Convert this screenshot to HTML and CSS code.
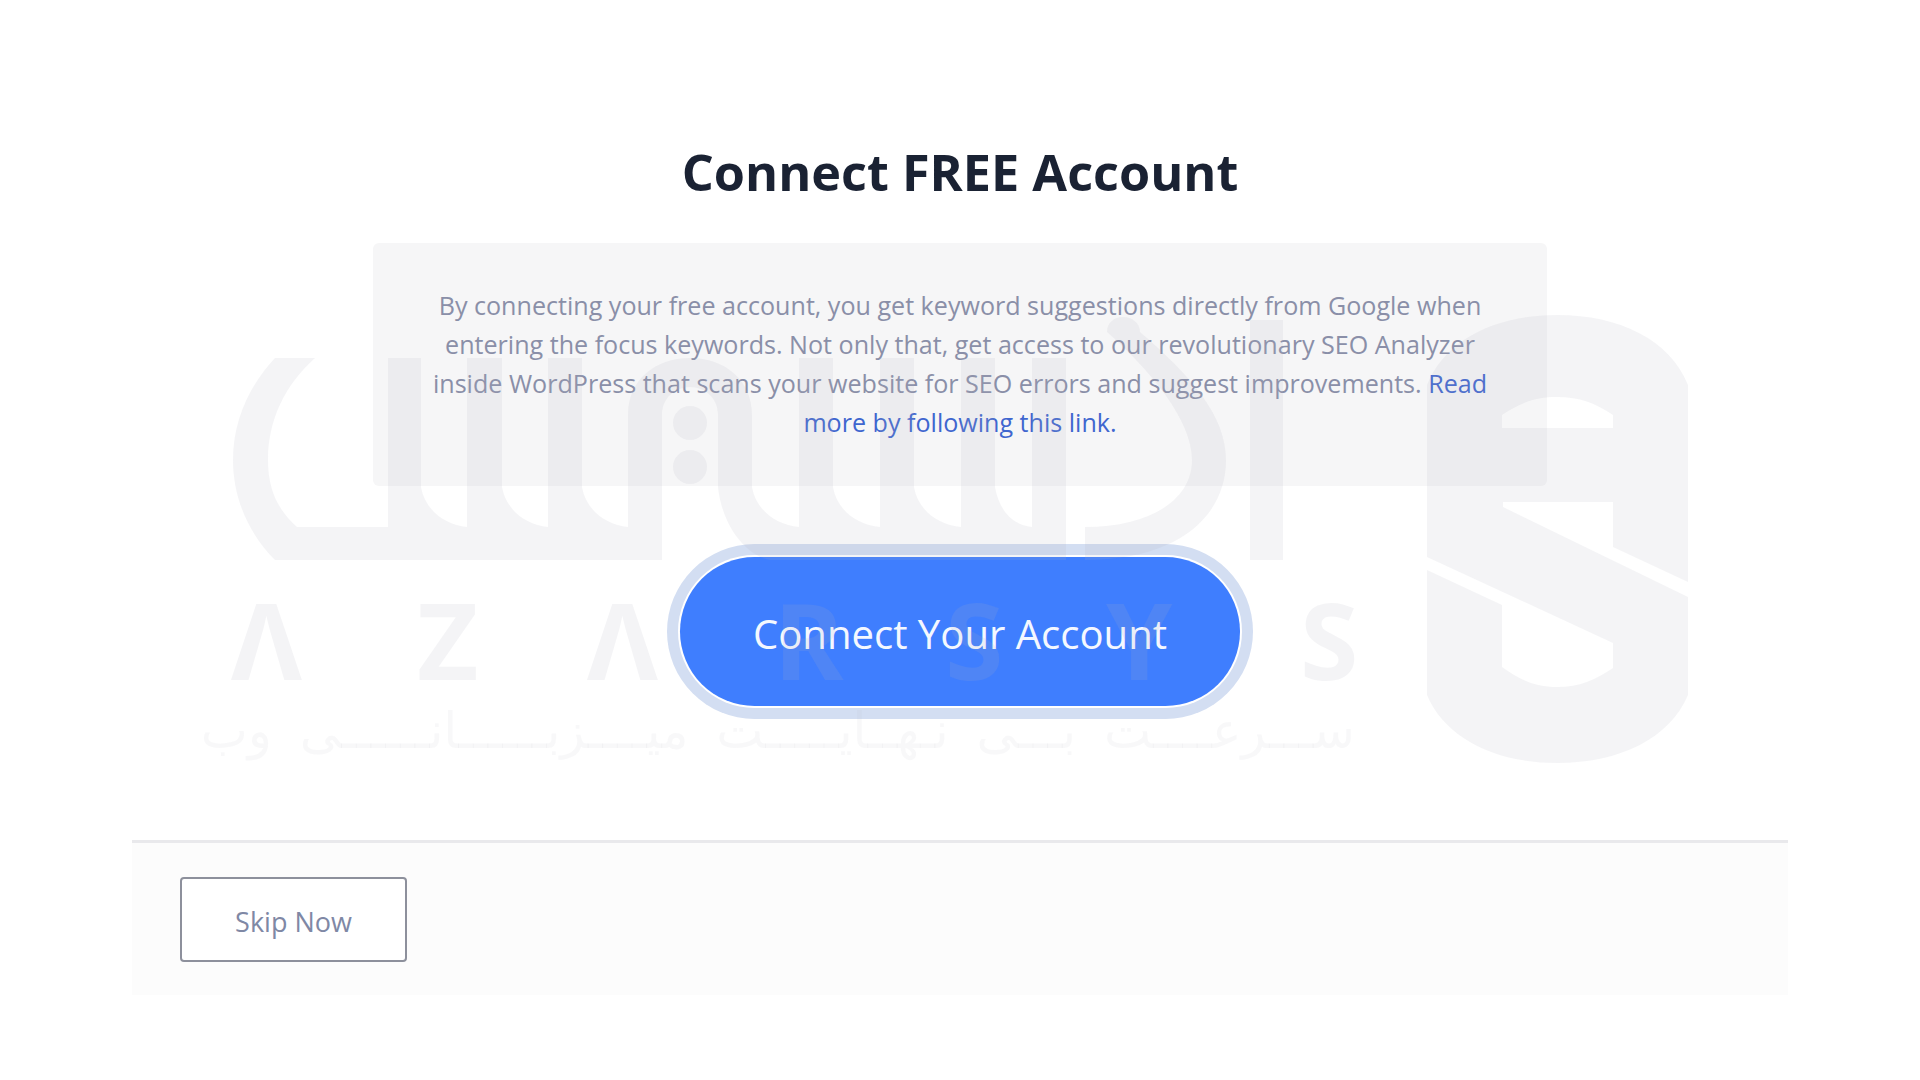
FILE: index.html
```html
<!DOCTYPE html>
<html lang="en">
<head>
<meta charset="utf-8">
<title>Connect FREE Account</title>
<link rel="stylesheet" href="styles.css">
</head>
<body>
<main class="page">
  <section class="content">
    <h1 class="title">Connect FREE Account</h1>
    <div class="panel">
      <p class="desc">By connecting your free account, you get keyword suggestions directly from Google when entering the focus keywords. Not only that, get access to our revolutionary SEO Analyzer inside WordPress that scans your website for SEO errors and suggest improvements. <a class="link" href="#">Read more by following this link.</a></p>
    </div>
    <div class="cta">
      <a class="connect" href="#">Connect Your Account</a>
    </div>
  </section>
  <footer class="footer">
    <a class="skip" href="#">Skip Now</a>
  </footer>
</main>

<svg class="watermark" viewBox="0 0 1920 1080" aria-hidden="true">
  <path class="wm-shape" fill-rule="evenodd" d="M1427 385 C1445 340 1495 315 1557 315 C1620 315 1670 340 1688 385 L1688 582 L1613 547 L1613 502 L1503 502 L1503 507 L1688 597 L1688 695 C1670 738 1620 763 1557 763 C1495 763 1445 738 1427 695 L1427 570 L1502 605 L1502 667 C1520 680 1535 687 1557 687 C1580 687 1595 680 1613 668 L1613 643 L1427 557 Z M1502 428 L1502 415 C1520 403 1535 397 1557 397 C1580 397 1595 403 1613 415 L1613 428 Z"/>
  <path class="wm-shape" d="M275 358 L315 358 C285 385 268 420 268 460 C268 490 278 510 297 527 L388 527 L388 358 L421 358 L421 487 C425 510 445 525 467 527 L467 358 L502 358 L502 487 C506 510 526 525 548 527 L548 358 L582 358 L582 487 C586 510 606 525 628 527 L628 415 C628 380 655 358 690 358 C725 358 752 380 752 415 L752 487 C756 510 776 525 799 527 L799 358 L833 358 L833 487 C837 510 857 525 880 527 L880 358 L914 358 L914 487 C918 510 938 525 961 527 L961 358 L995 358 L995 487 C999 510 1012 525 1032 527 L1032 358 L1066 358 L1066 560 L770 560 C745 555 722 525 718 487 L718 415 C718 398 705 387 690 387 C675 387 662 398 662 415 L662 560 L275 560 C250 535 233 500 233 460 C233 420 250 385 275 358 Z"/>
  <path class="wm-shape" d="M1107 332 C1107 323 1114 317 1123 317 C1132 317 1140 323 1140 332 C1190 375 1226 415 1226 460 C1226 515 1180 560 1085 560 L1085 527 C1150 527 1192 500 1192 460 C1192 420 1150 370 1107 332 Z"/>
  <path class="wm-shape" d="M1250 320 L1283 320 L1283 560 L1250 560 Z"/>
  <circle class="wm-shape" cx="690" cy="423" r="17"/>
  <circle class="wm-shape" cx="690" cy="467" r="17"/>
  <text class="wm-letters" x="231 417 587 774 945 1106 1300" y="680">ΛZΛRSYS</text>
  <text class="wm-tagline" x="1355" y="748" direction="rtl">ســـرعــــت بـــی نـهــایـــــت میــــزبــــــانــــــی وب</text>
</svg>
</body>
</html>
```

FILE: styles.css
```css
* { box-sizing: border-box; }
html, body { margin: 0; height: 100%; }
body {
  background: #fff;
  font-family: "Open Sans", "Noto Sans", sans-serif;
  overflow: hidden;
  position: relative;
}
.watermark {
  position: absolute;
  left: 0;
  top: 0;
  width: 1920px;
  height: 1080px;
  pointer-events: none;
}
.wm-shape { fill: #b4b4bc; fill-opacity: 0.14; }
.wm-letters {
  font-family: "Noto Sans", sans-serif;
  font-size: 106px;
  font-weight: 700;
  fill: #b4b4bc;
  fill-opacity: 0.14;
}
.wm-tagline {
  font-family: "DejaVu Sans", sans-serif;
  font-size: 50px;
  word-spacing: 12px;
  fill: #b4b4bc;
  fill-opacity: 0.09;
}
.page {
  width: 1656px;
  margin: 0 auto;
  padding-top: 142px;
}
.content { display: flex; flex-direction: column; align-items: center; }
.title {
  margin: 0;
  font-size: 50.4px;
  line-height: 60px;
  font-weight: 700;
  color: #1a2233;
}
.panel {
  width: 1174px;
  height: 243px;
  margin-top: 41px;
  background: #f6f6f7;
  border-radius: 6px;
  padding: 43px 57px 0;
}
.desc {
  margin: 0;
  font-size: 25.1px;
  line-height: 39px;
  text-align: center;
  color: #8a8fa8;
}
.link { color: #3f66cf; text-decoration: none; }
.cta { margin-top: 71px; }
.connect {
  display: flex;
  align-items: center;
  justify-content: center;
  width: 560px;
  height: 149px;
  padding-top: 4px;
  border-radius: 75px;
  background: #3f7efe;
  color: #f4f8ff;
  font-size: 40.1px;
  text-decoration: none;
  box-shadow: 0 0 0 2px #fff, 0 0 0 13px #d3def2;
}
.footer {
  margin-top: 134px;
  height: 155px;
  border-top: 3px solid #e9e9ec;
  background: #fcfcfc;
  padding: 34px 48px 0;
}
.skip {
  display: flex;
  align-items: center;
  justify-content: center;
  width: 227px;
  height: 85px;
  padding-top: 3px;
  border: 2px solid #8d909c;
  border-radius: 4px;
  background: #fff;
  color: #7f88a5;
  font-size: 27px;
  text-decoration: none;
}
```
